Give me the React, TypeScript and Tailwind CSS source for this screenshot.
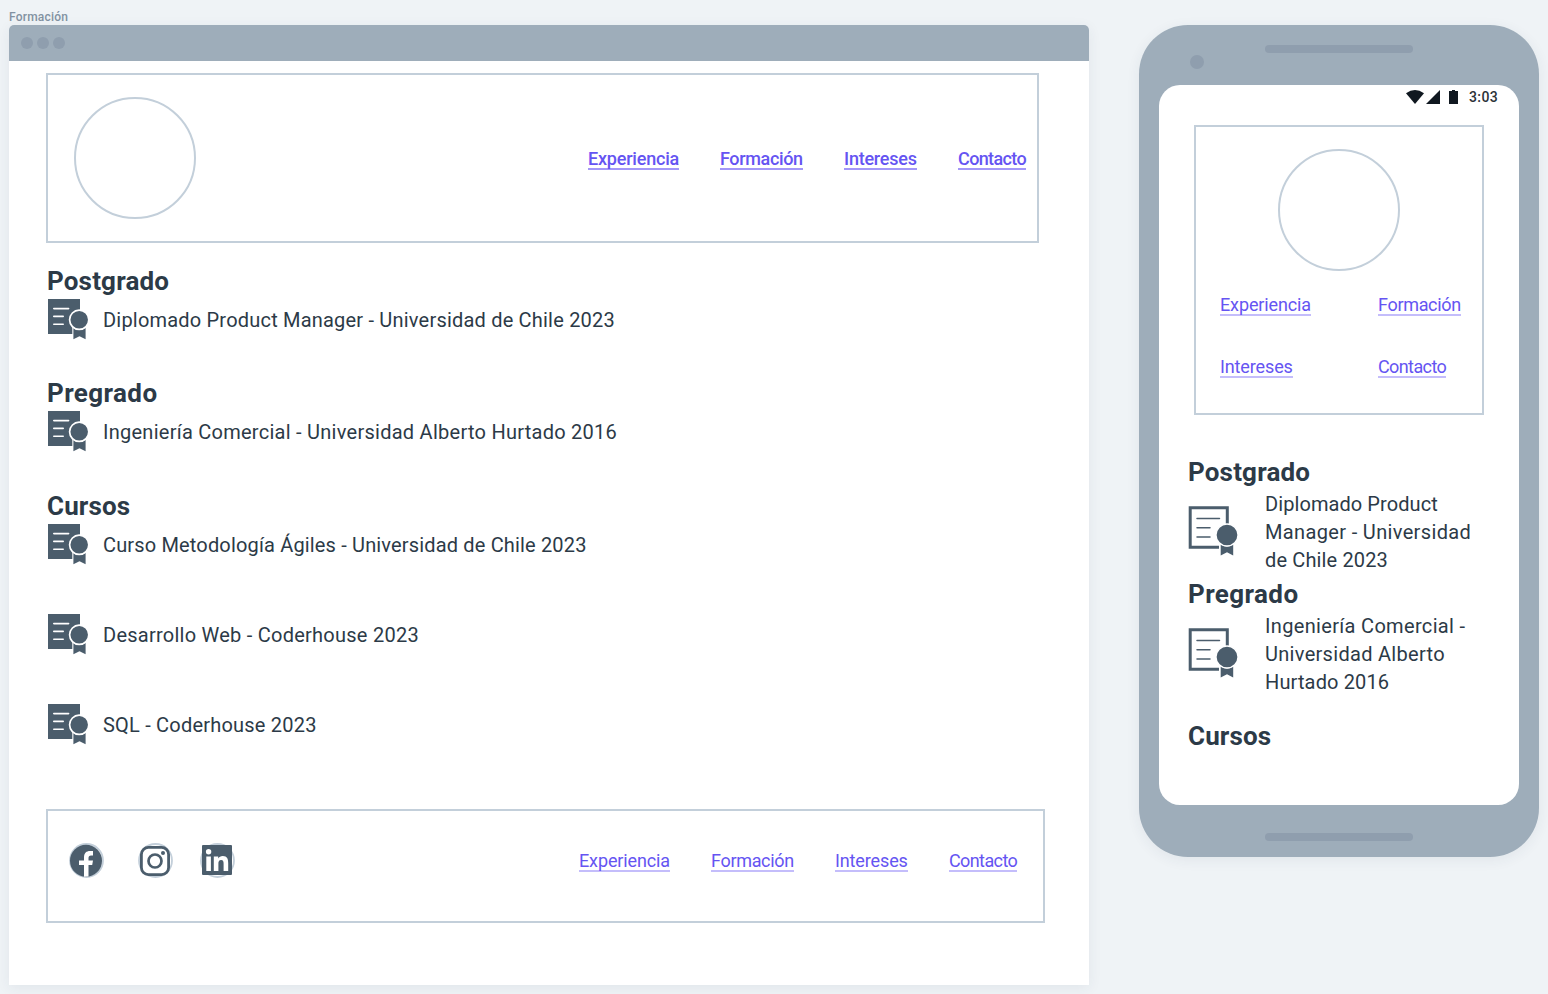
type TextProps = { className: string; children: string };

function NavLink({ className, children }: TextProps) {
  return (
    <a className={`block h-[22px] whitespace-nowrap border-b-2 text-lg leading-[22px] text-[#6554f2] ${className}`}>
      {children}
    </a>
  );
}

function SolidCertificate() {
  return (
    <svg className="block h-[41px] w-[42px] shrink-0" viewBox="0 0 42 41" fill="#4b5d6c">
      <path d="M0 0H32V22H24.3V35H0Z" />
      <path d="M5.8 9.6H20.6M5.8 17.4H15.2M5.8 25.3H15.2" stroke="#fff" strokeWidth="1.6" strokeLinecap="round" fill="none" />
      <path d="M25.4 29Q31.5 33 37.6 29V40.2L31.5 37.3L25.4 40.2Z" />
      <circle cx="31.2" cy="20.8" r="9.6" stroke="#fff" strokeWidth="1.7" />
    </svg>
  );
}

function OutlineCertificate() {
  return (
    <svg className="block h-[50px] w-[50px] shrink-0" viewBox="0 0 50 50" fill="#4b5d6c">
      <path d="M39.3 22V1.7H2.2V41.3H31" stroke="#4b5d6c" strokeWidth="3" fill="none" />
      <path d="M9 12.5H31.5M9 21.8H22M9 31H22" stroke="#4b5d6c" strokeWidth="1.5" strokeLinecap="round" fill="none" />
      <path d="M32.7 38.5Q39 42.5 45.2 38.5V49.5L39 46.3L32.7 49.5Z" />
      <circle cx="39" cy="29" r="11" stroke="#fff" strokeWidth="1.3" />
    </svg>
  );
}

function Entry({ className, children }: TextProps) {
  return (
    <div className="flex h-[41px] items-center gap-[13px]">
      <SolidCertificate />
      <p className={`whitespace-nowrap text-xl leading-7 ${className}`}>{children}</p>
    </div>
  );
}

function Heading({ className, children }: TextProps) {
  return <h2 className={`h-[34px] whitespace-nowrap text-[26px] font-bold ${className}`}>{children}</h2>;
}

function Browser() {
  return (
    <section className="flex h-[960px] w-[1080px] flex-col rounded-t-[5px] bg-white shadow-[0_3px_14px_rgba(40,60,80,0.07)]">
      <div className="flex h-9 shrink-0 items-center gap-1 rounded-t-[5px] bg-[#9eadba] pl-3">
        <span className="size-3 rounded-full bg-[#8f9eae]" />
        <span className="size-3 rounded-full bg-[#8f9eae]" />
        <span className="size-3 rounded-full bg-[#8f9eae]" />
      </div>
      <header className="ml-[37px] mt-3 flex h-[170px] w-[993px] shrink-0 items-center justify-between border-2 border-[#c3cfda] pl-[26px] pr-[11px]">
        <div className="size-[122px] rounded-full border-2 border-[#c3cfda]" />
        <nav className="flex gap-[41px] pt-[2px] font-medium">
          <NavLink className="w-[91px] border-[#a397f8] tracking-[-0.2px]">Experiencia</NavLink>
          <NavLink className="w-[83px] border-[#a397f8] tracking-[-0.36px]">Formación</NavLink>
          <NavLink className="w-[73px] border-[#a397f8] tracking-[-0.22px]">Intereses</NavLink>
          <NavLink className="w-[68px] border-[#a397f8] tracking-[-0.62px]">Contacto</NavLink>
        </nav>
      </header>
      <main className="flex flex-col pl-[39px] pt-[22px] text-[#2c3a47]">
        <Heading className="-ml-px leading-8 tracking-[0.17px]">Postgrado</Heading>
        <Entry className="tracking-[0.2px]">Diplomado Product Manager - Universidad de Chile 2023</Entry>
        <Heading className="-ml-px mt-[37px] leading-8 tracking-[0.4px]">Pregrado</Heading>
        <Entry className="tracking-[0.26px]">Ingeniería Comercial - Universidad Alberto Hurtado 2016</Entry>
        <Heading className="-ml-px mt-[38px] leading-8 tracking-[0.12px]">Cursos</Heading>
        <div className="flex flex-col gap-[49px]">
          <Entry className="tracking-[0.16px]">Curso Metodología Ágiles - Universidad de Chile 2023</Entry>
          <Entry className="tracking-[0.25px]">Desarrollo Web - Coderhouse 2023</Entry>
          <Entry className="tracking-[0.21px]">SQL - Coderhouse 2023</Entry>
        </div>
      </main>
      <footer className="ml-[37px] mt-16 flex h-[114px] w-[999px] shrink-0 justify-between border-2 border-[#c3cfda] pl-[21px] pr-[26px]">
        <svg className="mt-[30px] block h-[38px] w-[170px]" viewBox="0 0 170 38" fill="none">
          <g stroke="#c3cfda" strokeWidth="1.8">
            <circle cx="17.5" cy="19.5" r="16.5" />
            <circle cx="86.5" cy="19.5" r="16.5" />
            <circle cx="148.5" cy="19.5" r="16.5" />
          </g>
          <circle cx="17" cy="19.7" r="16" fill="#4b5d6c" />
          <path d="M15 35.8V24H10V19.5H15V16.5C15 12 17.5 10 21 10H24V14.4H22C20.3 14.4 19.5 15.2 19.5 17V19.5H24L23.2 24H19.5V35.6Z" fill="#fff" />
          <rect x="72.4" y="6.4" width="27.2" height="27.2" rx="7" fill="#fff" stroke="#4b5d6c" strokeWidth="2.8" />
          <circle cx="86" cy="20" r="6.5" stroke="#4b5d6c" strokeWidth="2.7" />
          <circle cx="94" cy="12" r="2" fill="#4b5d6c" />
          <rect x="133" y="4" width="30" height="30" rx="1" fill="#4b5d6c" />
          <circle cx="139.6" cy="10.7" r="2.7" fill="#fff" />
          <path d="M137.3 15.5H141.9V30H137.3ZM144.8 15.5H149.2V17.5C150 16 151.7 15.1 153.8 15.1C158.3 15.1 159.2 18 159.2 22V30H154.6V23C154.6 21 154.4 19.1 152.1 19.1C149.8 19.1 149.4 20.9 149.4 22.8V30H144.8Z" fill="#fff" />
        </svg>
        <nav className="mt-[39px] flex gap-[41px]">
          <NavLink className="w-[91px] border-[#c4bdfb] tracking-[-0.12px]">Experiencia</NavLink>
          <NavLink className="w-[83px] border-[#c4bdfb] tracking-[-0.32px]">Formación</NavLink>
          <NavLink className="w-[73px] border-[#c4bdfb] tracking-[-0.12px]">Intereses</NavLink>
          <NavLink className="w-[68px] border-[#c4bdfb] tracking-[-0.6px]">Contacto</NavLink>
        </nav>
      </footer>
    </section>
  );
}

function StatusBar() {
  return (
    <div className="flex h-[25px] items-center justify-end pb-[2px] pr-5">
      <svg className="block h-4 w-[54px]" viewBox="0 0 54 16" fill="#101820">
        <path d="M0 4.2Q9 -2.4 18 4.2L9 15Z" />
        <path d="M34 1V15H20Z" />
        <path d="M43 2H46V1H49V2H52V15H43Z" />
      </svg>
      <span className="ml-[9px] w-[30px] whitespace-nowrap text-sm font-medium leading-5 tracking-[0.4px] text-[#2c3238]">3:03</span>
    </div>
  );
}

function Phone() {
  return (
    <section className="flex h-[832px] w-[400px] flex-col items-center rounded-[49px] bg-[#9eadba] shadow-[0_3px_14px_rgba(40,60,80,0.07)]">
      <div className="mt-5 h-2 w-[148px] rounded-full bg-[#8f9eae]" />
      <div className="ml-[51px] mt-[2px] size-[14px] self-start rounded-full bg-[#8f9eae]" />
      <div className="mt-4 flex h-[720px] w-[360px] shrink-0 flex-col rounded-[21px] bg-white">
        <StatusBar />
        <header className="ml-[35px] mt-[15px] flex h-[290px] w-[290px] flex-col items-center border-2 border-[#c3cfda] pt-[22px]">
          <div className="size-[122px] shrink-0 rounded-full border-2 border-[#c3cfda]" />
          <nav className="ml-6 mt-[23px] grid grid-cols-[158px_1fr] gap-y-10 self-start">
            <NavLink className="w-[91px] border-[#c4bdfb] tracking-[-0.12px]">Experiencia</NavLink>
            <NavLink className="w-[83px] border-[#c4bdfb] tracking-[-0.32px]">Formación</NavLink>
            <NavLink className="w-[73px] border-[#c4bdfb] tracking-[-0.12px]">Intereses</NavLink>
            <NavLink className="w-[68px] border-[#c4bdfb] tracking-[-0.6px]">Contacto</NavLink>
          </nav>
        </header>
        <main className="flex flex-col pl-[29px] pt-10 text-[#2c3a47]">
          <Heading className="leading-[34px] tracking-[0.17px]">Postgrado</Heading>
          <div className="flex h-[84px] gap-[27px]">
            <div className="pt-[17px]"><OutlineCertificate /></div>
            <p className="whitespace-nowrap pt-px text-xl leading-7">
              <span className="block tracking-[0.08px]">Diplomado Product</span>
              <span className="block tracking-[0.35px]">Manager - Universidad</span>
              <span className="block tracking-[0.14px]">de Chile 2023</span>
            </p>
          </div>
          <Heading className="mt-1 leading-[34px] tracking-[0.4px]">Pregrado</Heading>
          <div className="flex h-[84px] gap-[27px]">
            <div className="pt-[17px]"><OutlineCertificate /></div>
            <p className="whitespace-nowrap pt-px text-xl leading-7">
              <span className="block tracking-[0.33px]">Ingeniería Comercial -</span>
              <span className="block tracking-[0.3px]">Universidad Alberto</span>
              <span className="block tracking-[0.13px]">Hurtado 2016</span>
            </p>
          </div>
          <Heading className="mt-6 leading-[34px] tracking-[0.12px]">Cursos</Heading>
        </main>
      </div>
      <div className="mt-7 h-2 w-[148px] rounded-full bg-[#8f9eae]" />
    </section>
  );
}

export default function App() {
  return (
    <div className="h-[994px] w-[1548px] overflow-hidden bg-[#eff3f6] pl-[9px] pt-2 font-['Roboto','Liberation_Sans',sans-serif]">
      <div className="h-[17px] whitespace-nowrap text-xs font-medium leading-[19px] tracking-[0.2px] text-[#8292a2]">Formación</div>
      <div className="flex items-start gap-[50px]">
        <Browser />
        <Phone />
      </div>
    </div>
  );
}
